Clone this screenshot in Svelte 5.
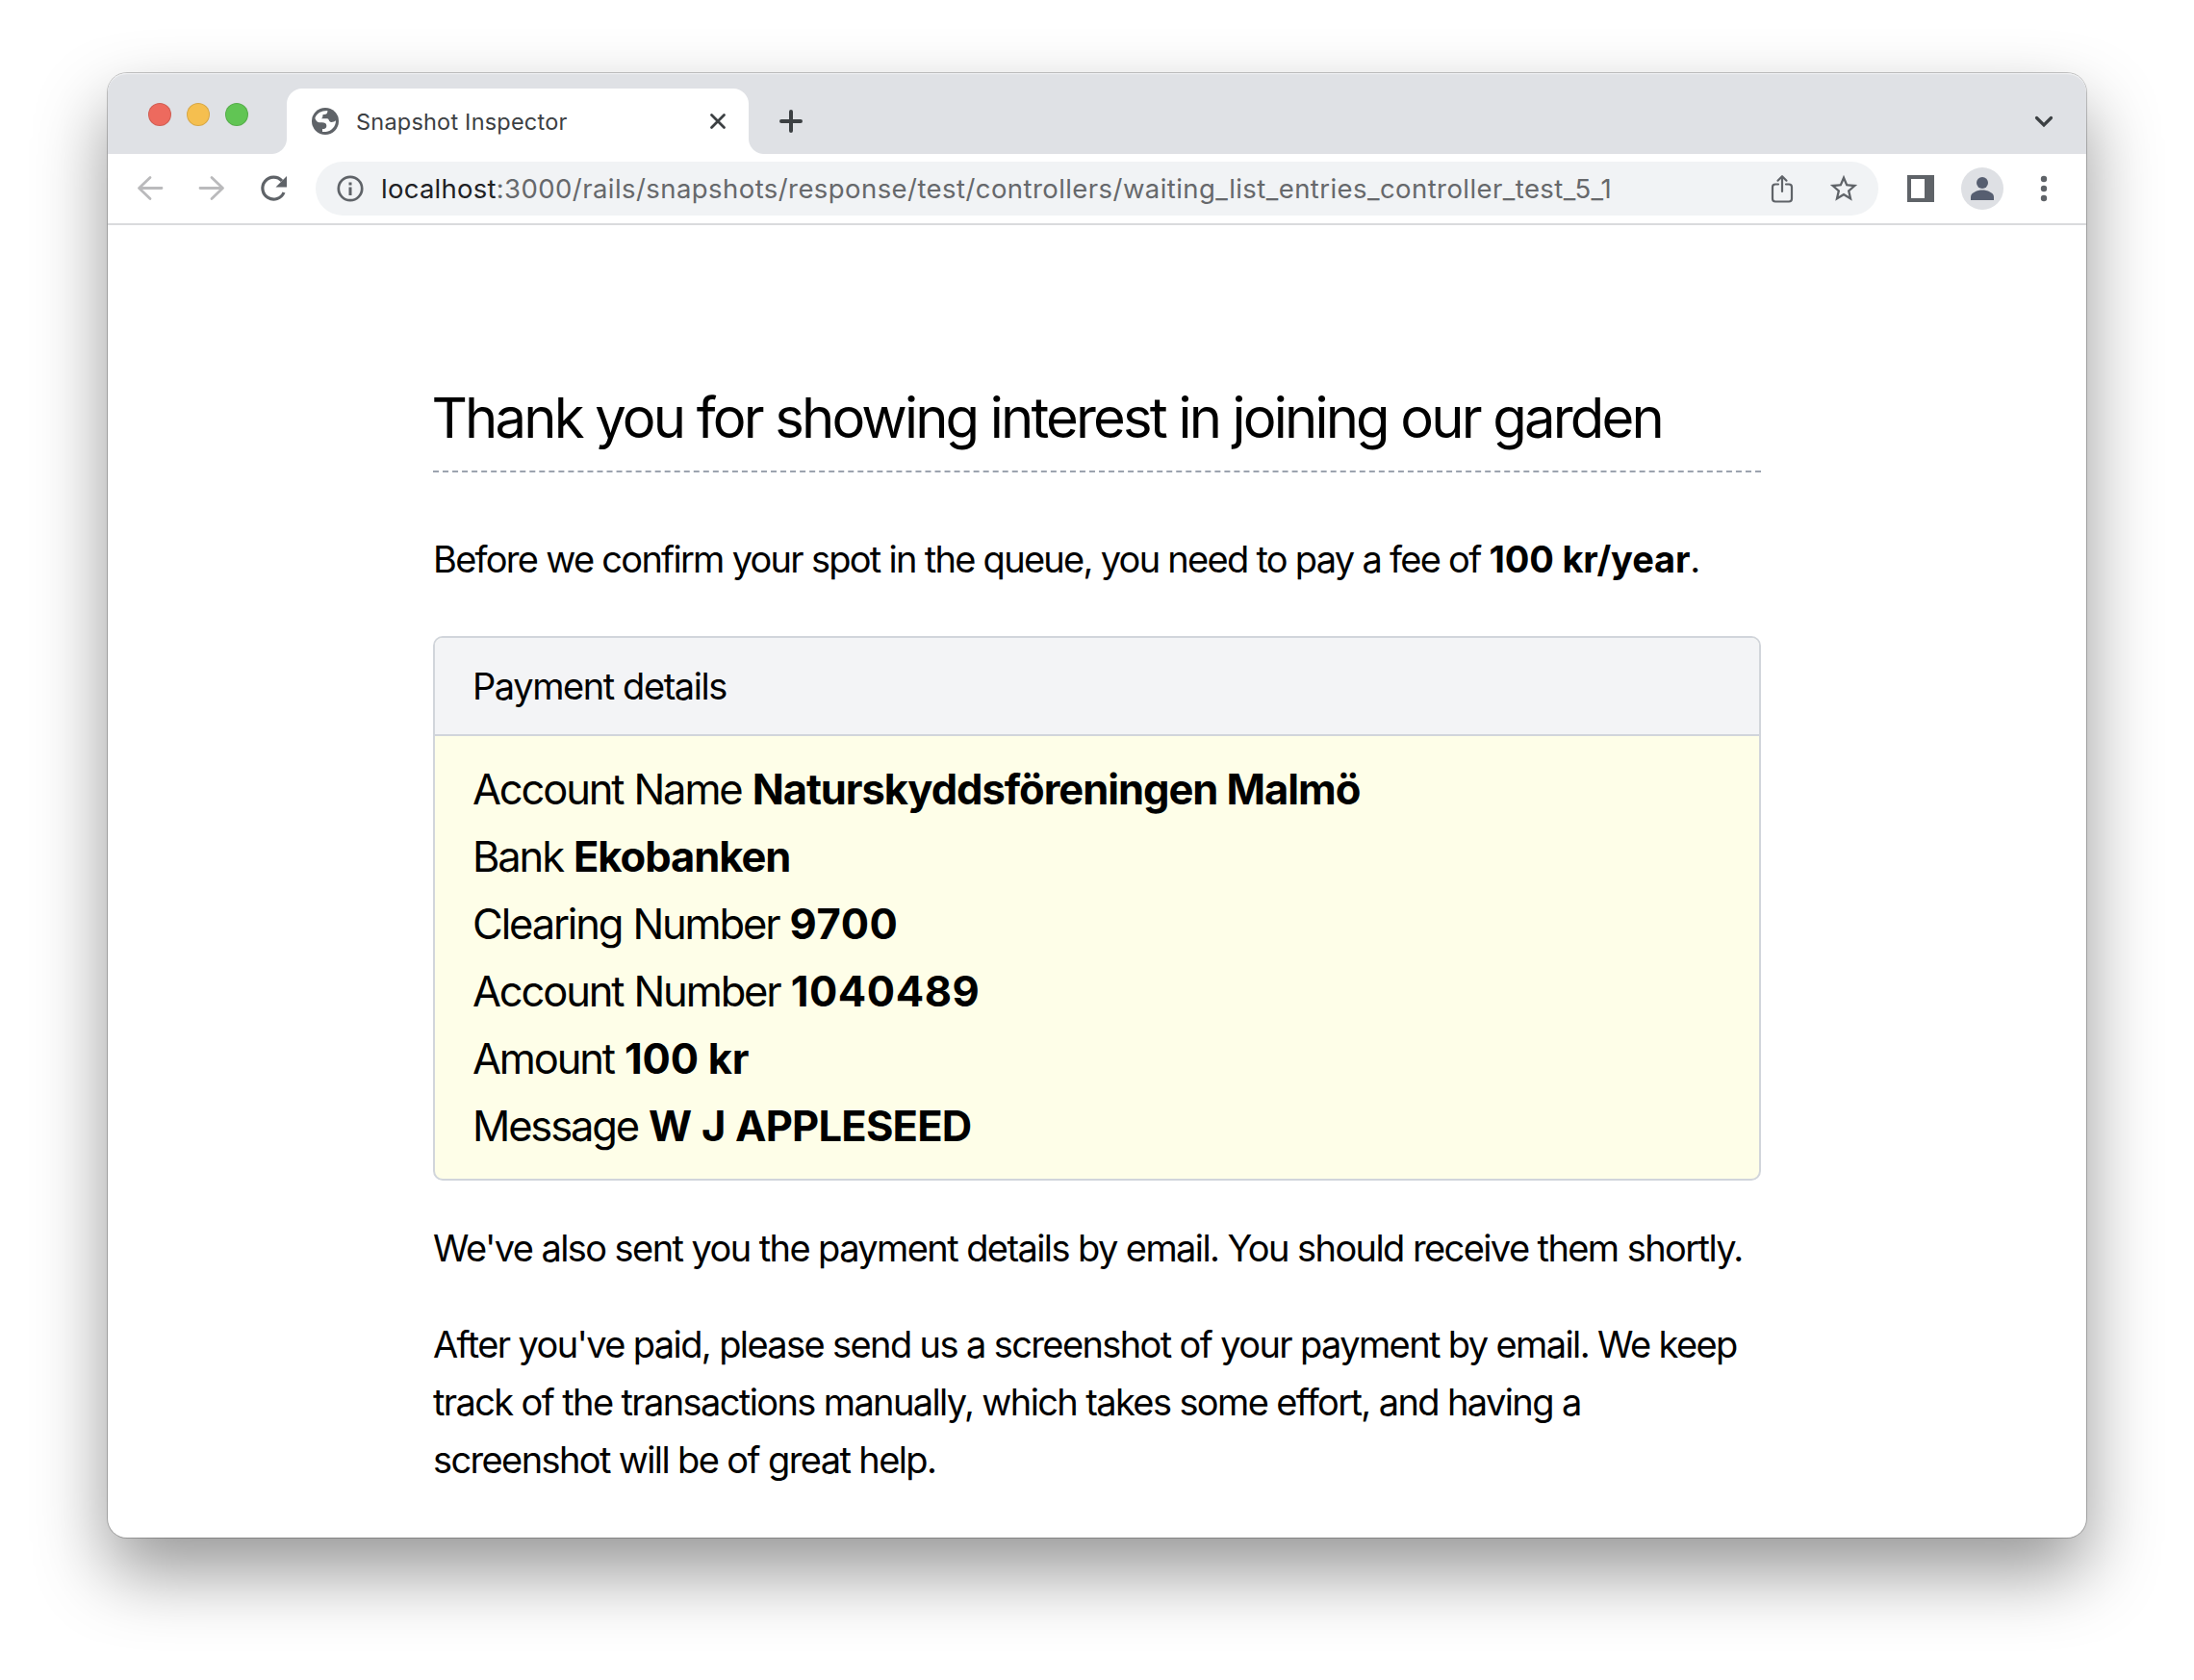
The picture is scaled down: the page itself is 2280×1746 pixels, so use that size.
<script>
  const details = [
    { label: 'Account Name', value: 'Naturskyddsföreningen Malmö', kind: 'words' },
    { label: 'Bank', value: 'Ekobanken', kind: 'words' },
    { label: 'Clearing Number', value: '9700', kind: 'digits' },
    { label: 'Account Number', value: '1040489', kind: 'digits' },
    { label: 'Amount', value: '100 kr', kind: 'amount' },
    { label: 'Message', value: 'W J APPLESEED', kind: 'caps' }
  ];
</script>

<div class="desktop">
  <div class="window">
    <header class="tabstrip">
      <div class="lights">
        <span class="light red"></span>
        <span class="light yellow"></span>
        <span class="light green"></span>
      </div>
      <div class="tab">
        <svg class="globe" viewBox="0 0 84 84"><circle cx="42" cy="42" r="42" fill="#5f6368"/><path fill="#fff" d="M10 32C15 18 28 9 49 9v3c0 6-4 9-11 9-4 0-4 2-4 6 0 3-2 5-4 7h18c7 0 4 11 13 11 6 0 10-2 14-5 0 18-13 33-31 35H33V66c9 0 13-3 13-10 0-8-6-10-14-10h-8c-6 0-12-6-14-14z"/></svg>
        <span class="tab-title">Snapshot Inspector</span>
        <svg class="close" viewBox="0 0 20 20"><path d="M3.500 3.500 16.500 16.500M16.500 3.500 3.500 16.500" stroke="#3c4043" stroke-width="2.800" stroke-linecap="round"/></svg>
      </div>
      <svg class="plus" viewBox="0 0 28 28"><path d="M14 4v20M4 14h20" stroke="#3c4043" stroke-width="4" stroke-linecap="round"/></svg>
      <svg class="chevron" viewBox="0 0 24 24"><path d="M4.500 8.500 12 16l7.500-7.500" fill="none" stroke="#3c4043" stroke-width="3.200" stroke-linecap="round"/></svg>
    </header>

    <nav class="toolbar">
      <svg class="nav-icon back" viewBox="0 0 32 32"><path d="M28 15.500H5M16 4.500 4.500 15.500 16 26.500" fill="none" stroke="#bababc" stroke-width="2.800" stroke-linecap="round" stroke-linejoin="round"/></svg>
      <svg class="nav-icon forward" viewBox="0 0 32 32"><path d="M4 15.500h23M16 4.500 27.500 15.500 16 26.500" fill="none" stroke="#bababc" stroke-width="2.800" stroke-linecap="round" stroke-linejoin="round"/></svg>
      <svg class="nav-icon reload" viewBox="0 0 32 32"><path d="M27 20A11.500 11.500 0 1 1 25 8" fill="none" stroke="#5f6368" stroke-width="3.200"/><path d="M30 3v11.500H18.500z" fill="#5f6368"/></svg>
      <div class="omnibox">
        <svg class="info" viewBox="0 0 30 30"><circle cx="15" cy="15" r="12.200" fill="none" stroke="#5f6368" stroke-width="2.700"/><path d="M15 13.500v8.500M15 8.500v3" stroke="#5f6368" stroke-width="3"/></svg>
        <span class="url"><span class="host">localhost</span>:3000/rails/snapshots/response/test/controllers/waiting_list_entries_controller_test_5_1</span>
        <svg class="share" viewBox="0 0 28 32"><path d="M10 11.500H7q-3 0-3 3v12q0 3 3 3h14q3 0 3-3v-12q0-3-3-3h-3M14 19V3.500M9.500 7.700 14 3.200l4.500 4.500" fill="none" stroke="#5f6368" stroke-width="2.200" stroke-linecap="round" stroke-linejoin="round"/></svg>
        <svg class="star" viewBox="0 0 24 24"><path fill="#5f6368" d="M22 9.240l-7.190-.620L12 2 9.190 8.630 2 9.240l5.460 4.730L5.820 21 12 17.270 18.180 21l-1.630-7.030L22 9.240zM12 15.400l-3.760 2.270 1-4.280-3.320-2.880 4.380-.380L12 6.100l1.710 4.040 4.380.380-3.320 2.880 1 4.280L12 15.400z"/></svg>
      </div>
      <svg class="panel" viewBox="0 0 28 28"><path fill="#5f6368" fill-rule="evenodd" d="M0 0h28v28H0zM4 4v20h14V4z"/></svg>
      <svg class="avatar" viewBox="0 0 44 44"><circle cx="22" cy="22" r="22" fill="#dee0e4"/><circle cx="22" cy="16" r="6" fill="#565e70"/><path d="M10 34v-3.500c0-4.300 7-7 12-7s12 2.700 12 7V34z" fill="#565e70"/></svg>
      <svg class="dots" viewBox="0 0 8 28"><g fill="#5f6368"><circle cx="4" cy="4" r="3.200"/><circle cx="4" cy="14" r="3.200"/><circle cx="4" cy="24" r="3.200"/></g></svg>
    </nav>

    <main class="page">
      <h1>Thank you for showing interest in joining our garden</h1>
      <p class="intro">Before we confirm your spot in the queue, you need to pay a fee of <strong>100 kr/year</strong>.</p>
      <section class="card">
        <h2>Payment details</h2>
        <ul>
          {#each details as { label, value, kind }}
            <li>{label} <strong class={kind}>{value}</strong></li>
          {/each}
        </ul>
      </section>
      <p class="note sent">We've also sent you the payment details by email. You should receive them shortly.</p>
      <p class="note">After you've paid, please send us a screenshot of your payment by email. We keep track of the transactions manually, which takes some effort, and having a screenshot will be of great help.</p>
    </main>
  </div>
</div>

<style>
  :global(body) { margin: 0; background: #fff; }
  .desktop {
    box-sizing: border-box;
    width: 2280px;
    height: 1746px;
    padding: 76px 112px 148px;
    background: #fff;
    font-family: Inter, "Liberation Sans", sans-serif;
    overflow: hidden;
  }
  .window {
    display: flex;
    flex-direction: column;
    height: 1522px;
    border-radius: 20px;
    background: #fff;
    box-shadow: 0 0 0 1px rgba(0, 0, 0, 0.22), 0 36px 74px rgba(0, 0, 0, 0.41);
  }
  svg { display: block; flex: none; }

  .tabstrip {
    display: flex;
    align-items: center;
    height: 84px;
    box-sizing: border-box;
    padding: 16px 32px 0 42px;
    border-radius: 20px 20px 0 0;
    background: #dfe1e5;
    box-shadow: inset 0 2px 1px -1px #f2f3f5;
  }
  .lights { display: flex; gap: 16px; margin: 0 40px 14px 0; }
  .light { width: 24px; height: 24px; border-radius: 50%; box-sizing: border-box; border: 1px solid rgba(0, 0, 0, 0.12); }
  .red { background: #ed6a5e; }
  .yellow { background: #f5bf4f; }
  .green { background: #61c554; }
  .tab {
    position: relative;
    display: flex;
    align-items: center;
    width: 480px;
    height: 68px;
    box-sizing: border-box;
    padding: 0 22px 0 26px;
    border-radius: 16px 16px 0 0;
    background: #fff;
  }
  /* Outward curves where the active tab meets the toolbar */
  .tab::before, .tab::after {
    content: "";
    position: absolute;
    bottom: 0;
    width: 16px;
    height: 16px;
  }
  .tab::before { left: -16px; background: radial-gradient(circle at 0 0, transparent 15.500px, #fff 16.500px); }
  .tab::after { right: -16px; background: radial-gradient(circle at 100% 0, transparent 15.500px, #fff 16.500px); }
  .globe { width: 28px; height: 28px; }
  .tab-title { flex: 1; margin-left: 18px; font-size: 23.500px; letter-spacing: 0.210px; color: #3c4043; white-space: nowrap; }
  .close { width: 20px; height: 20px; }
  .plus { width: 28px; height: 28px; margin-left: 30px; }
  .chevron { width: 24px; height: 24px; margin-left: auto; }

  .toolbar {
    display: flex;
    align-items: center;
    height: 74px;
    box-sizing: border-box;
    padding: 0 40px 0 28px;
    border-bottom: 2px solid #dadbdd;
  }
  .nav-icon { width: 32px; height: 32px; margin-right: 32px; }
  .reload { margin-right: 28px; }
  .omnibox {
    display: flex;
    align-items: center;
    width: 1624px;
    height: 56px;
    box-sizing: border-box;
    padding: 0 19px 0 21px;
    border-radius: 28px;
    background: #f1f3f5;
  }
  .info { width: 30px; height: 30px; }
  .url { flex: 1; margin-left: 17px; font-size: 27.500px; letter-spacing: 0.430px; color: #66686b; white-space: nowrap; }
  .host { letter-spacing: 0.250px; color: #202124; }
  .share { width: 28px; height: 32px; margin-right: 33px; }
  .star { width: 34px; height: 34px; }
  .panel { width: 28px; height: 28px; margin-left: 30px; }
  .avatar { width: 44px; height: 44px; margin-left: 28px; }
  .dots { width: 8px; height: 28px; margin-left: 38px; }

  .page { padding: 164px 338px 0; color: #000; }
  h1 {
    margin: 0 0 60px;
    padding-bottom: 19px;
    border-bottom: 2px dashed #9ca3af;
    font-size: 58px;
    font-weight: 400;
    line-height: 72px;
    letter-spacing: -2.830px;
    text-indent: -1.500px;
    white-space: nowrap;
  }
  p { margin: 0; font-size: 38px; line-height: 60px; letter-spacing: -1.620px; }
  strong { font-weight: 700; }
  .intro { margin-bottom: 50px; letter-spacing: -1.720px; }
  .intro strong { letter-spacing: -0.160px; }
  .card { border: 2px solid #d1d5db; border-radius: 10px; overflow: hidden; background: #fefee8; }
  h2 {
    margin: 0;
    padding: 20px 39px;
    border-bottom: 2px solid #d1d5db;
    background: #f3f4f6;
    font-size: 38px;
    font-weight: 400;
    line-height: 60px;
    letter-spacing: -1.420px;
  }
  ul { margin: 0; padding: 20px 39px; list-style: none; font-size: 43.500px; line-height: 70px; letter-spacing: -2.150px; word-spacing: 1px; }
  .words { letter-spacing: -1.050px; word-spacing: 0; }
  .digits { letter-spacing: 0.550px; }
  .amount { letter-spacing: -0.250px; word-spacing: 0; }
  .caps { letter-spacing: -0.800px; }
  .note { margin-top: 40px; }
  .sent { letter-spacing: -1.585px; }
</style>
